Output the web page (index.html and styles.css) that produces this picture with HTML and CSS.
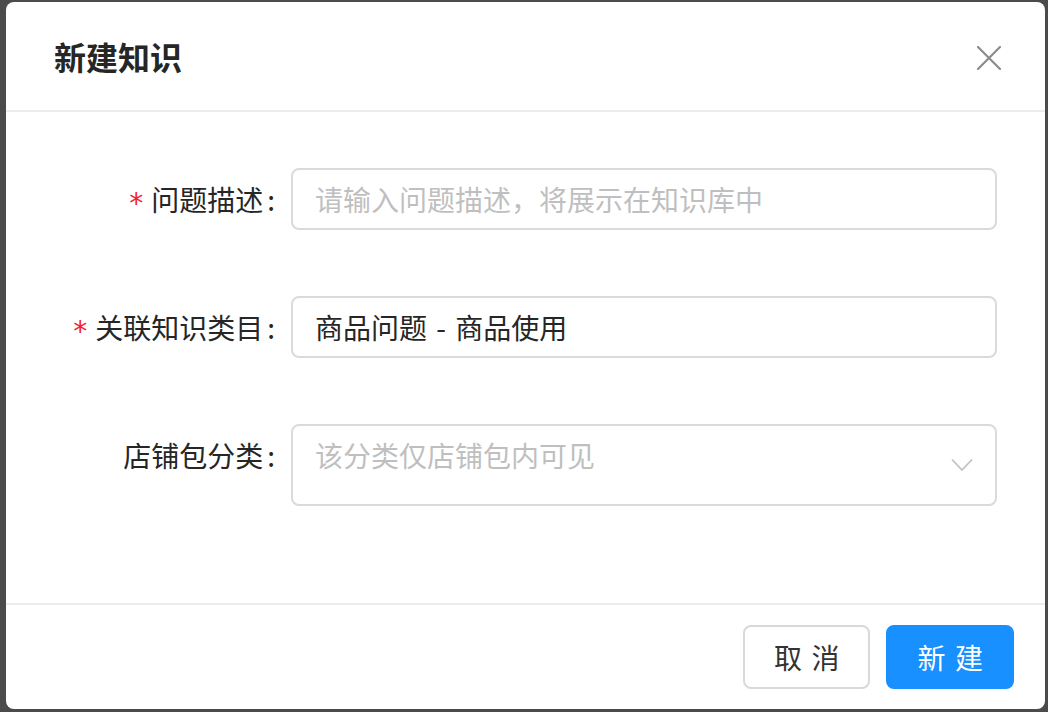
FILE: index.html
```html
<!DOCTYPE html>
<html lang="zh-CN">
<head>
<meta charset="utf-8">
<title>新建知识</title>
<link rel="stylesheet" href="styles.css">
</head>
<body>
<div class="overlay">
  <div class="modal">
    <div class="modal-header">
      <div class="modal-title">新建知识</div>
      <button class="modal-close" type="button" aria-label="关闭">
        <svg width="24" height="24" viewBox="0 0 24 24"><path d="M1 1 L23 23 M23 1 L1 23" stroke="#8c8c8c" stroke-width="2.2" fill="none" stroke-linecap="round"/></svg>
      </button>
    </div>
    <div class="modal-body">
      <form class="form">
        <div class="form-row">
          <label class="form-label"><span class="req">*</span>问题描述<span class="colon">:</span></label>
          <input class="input" type="text" placeholder="请输入问题描述，将展示在知识库中">
        </div>
        <div class="form-row">
          <label class="form-label"><span class="req">*</span>关联知识类目<span class="colon">:</span></label>
          <input class="input" type="text" value="商品问题 - 商品使用">
        </div>
        <div class="form-row">
          <label class="form-label">店铺包分类<span class="colon">:</span></label>
          <div class="select">
            <span class="select-placeholder">该分类仅店铺包内可见</span>
            <svg class="select-arrow" width="22" height="14" viewBox="0 0 22 14"><polyline points="1,1.5 11,12 21,1.5" fill="none" stroke="#c2c2c2" stroke-width="1.8"/></svg>
          </div>
        </div>
      </form>
    </div>
    <div class="modal-footer">
      <button class="btn" type="button"><span>取消</span></button>
      <button class="btn btn-primary" type="button"><span>新建</span></button>
    </div>
  </div>
</div>
</body>
</html>
```
FILE: styles.css
```css
html, body {
  margin: 0;
  height: 100%;
}
body {
  background: #4b4b4b;
  font-family: "Noto Sans CJK SC", "Noto Sans", sans-serif;
}
.overlay {
  height: 712px;
  box-sizing: border-box;
  padding: 2px 3px 3px 6px;
  display: flex;
}
.modal {
  flex: 1;
  background: #fff;
  border-radius: 8px;
  display: flex;
  flex-direction: column;
  overflow: hidden;
}
.modal-header {
  height: 108px;
  border-bottom: 2px solid #ececec;
  display: flex;
  align-items: center;
  justify-content: space-between;
  padding-left: 48px;
}
.modal-title {
  font-size: 32px;
  font-weight: 600;
  line-height: 44px;
  color: #262626;
}
.modal-close {
  width: 112px;
  height: 108px;
  border: 0;
  background: none;
  padding: 3px 0 0;
  display: flex;
  align-items: center;
  justify-content: center;
}
.modal-body {
  flex: 1;
  padding: 56px 48px 0;
}
.form {
  display: flex;
  flex-direction: column;
  gap: 66px;
  margin: 0;
}
.form-row {
  display: grid;
  grid-template-columns: 237px 1fr;
  align-items: start;
}
.form-label {
  display: block;
  height: 62px;
  text-align: right;
  font-size: 28px;
  line-height: 62px;
  color: #262626;
  white-space: nowrap;
}
.req {
  color: #f5222d;
  font-family: "DejaVu Sans", sans-serif;
  line-height: 1;
  margin-right: 8px;
  vertical-align: -2px;
}
.colon {
  margin: 0 16px 0 4px;
}
.input {
  box-sizing: border-box;
  height: 62px;
  width: 100%;
  border: 2px solid #dadada;
  border-radius: 8px;
  padding: 0 22px;
  font-family: inherit;
  font-size: 28px;
  word-spacing: 3px;
  color: #262626;
  outline: none;
  background: #fff;
}
.input::placeholder {
  color: #bfbfbf;
}
.select {
  box-sizing: border-box;
  height: 82px;
  border: 2px solid #dadada;
  border-radius: 8px;
  padding: 0 22px;
  display: flex;
  justify-content: space-between;
}
.select-placeholder {
  font-size: 28px;
  line-height: 58px;
  color: #bfbfbf;
}
.select-arrow {
  align-self: center;
}
.modal-footer {
  border-top: 2px solid #ececec;
  padding: 20px 31px;
  display: flex;
  justify-content: flex-end;
  gap: 16px;
}
.btn {
  height: 64px;
  padding: 0 29px;
  font-family: inherit;
  font-size: 28px;
  white-space: nowrap;
  border-radius: 8px;
  border: 2px solid #d9d9d9;
  background: #fff;
  color: #333;
}
.btn span {
  letter-spacing: 0.34em;
  margin-right: -0.34em;
}
.btn-primary {
  background: #1890ff;
  border-color: #1890ff;
  color: #fff;
}
```
